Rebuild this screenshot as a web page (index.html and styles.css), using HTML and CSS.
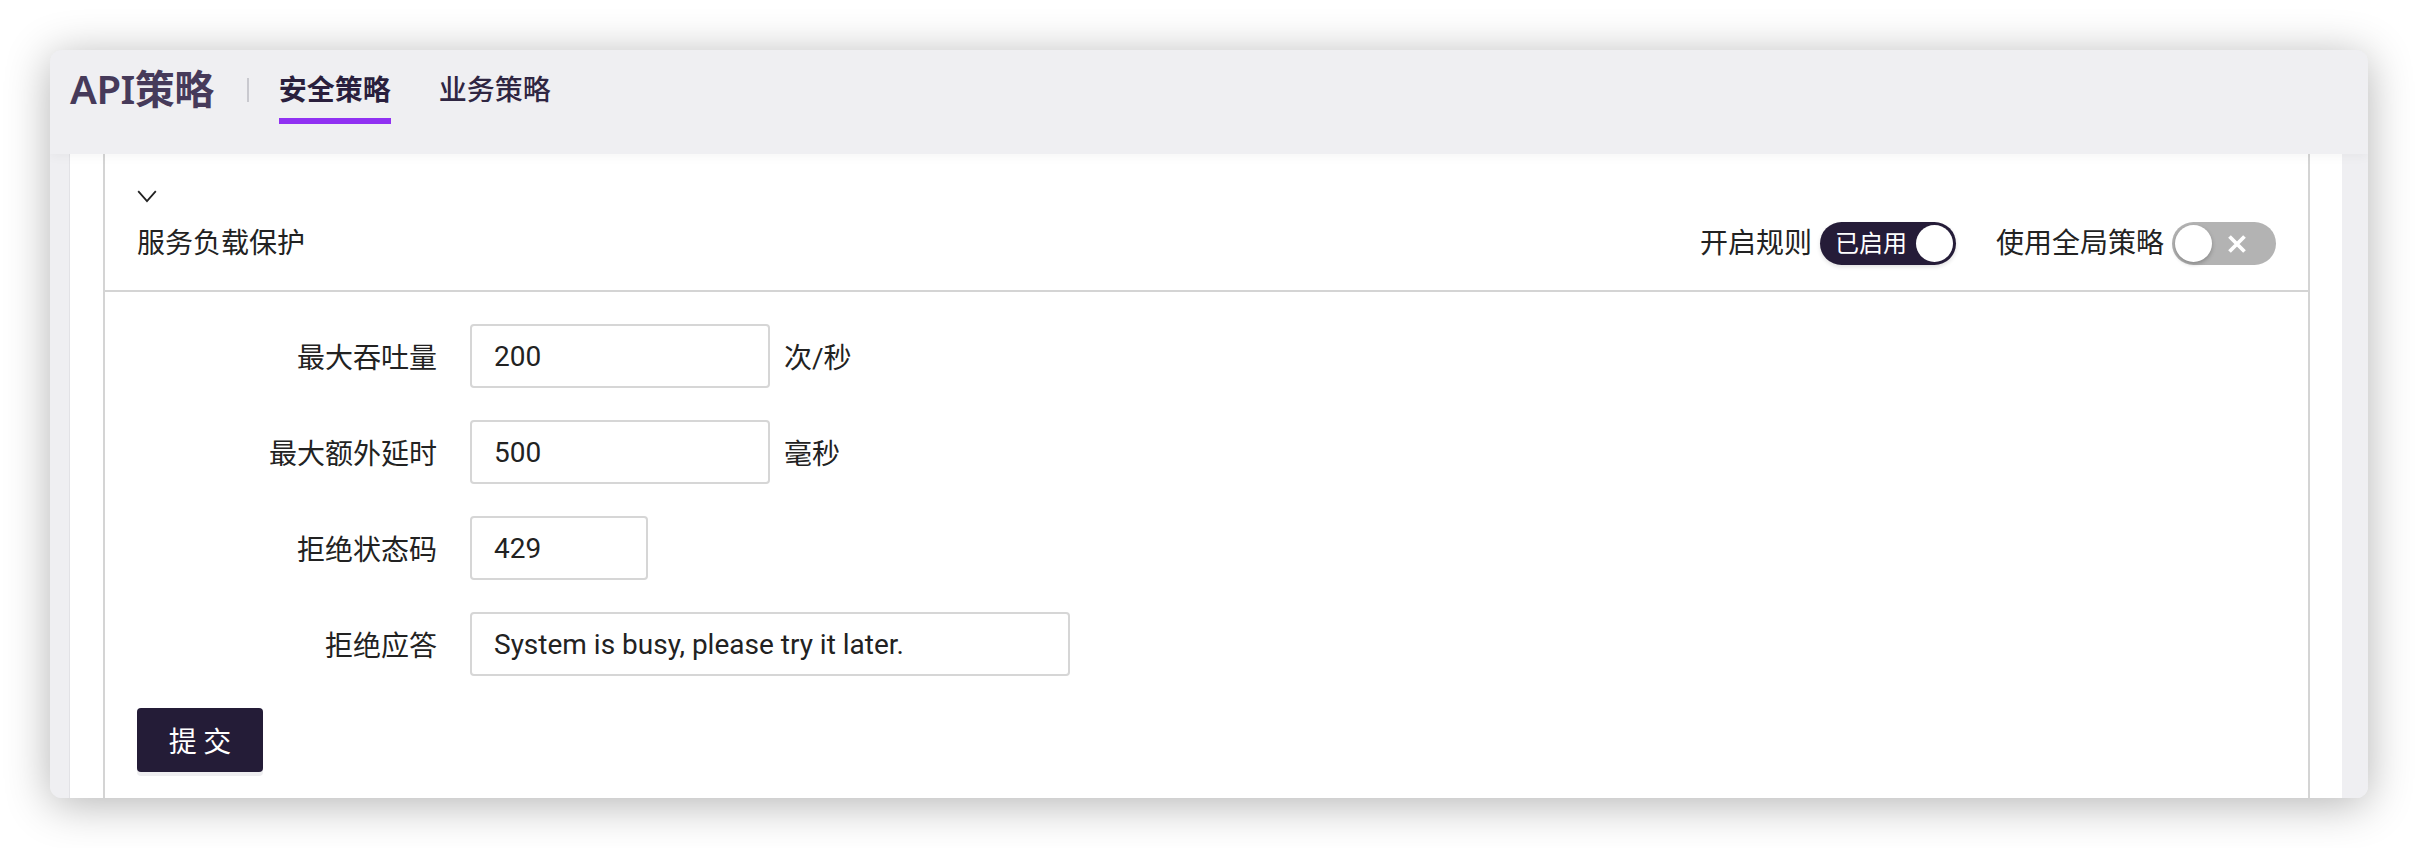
FILE: index.html
```html
<!DOCTYPE html>
<html lang="zh-CN">
<head>
<meta charset="utf-8">
<title>API策略</title>
<link rel="stylesheet" href="styles.css">
</head>
<body>
<div class="window">
  <header class="topbar">
    <h1 class="app-title">API策略</h1>
    <span class="sep"></span>
    <nav class="tabs">
      <a class="tab active">安全策略</a>
      <a class="tab">业务策略</a>
    </nav>
  </header>
  <div class="body">
    <div class="pad-left"></div>
    <main class="main">
      <section class="panel">
        <div class="panel-head">
          <svg class="chevron" width="20" height="13" viewBox="0 0 20 13"><path d="M1.2 1.2 L10 11.2 L18.8 1.2" fill="none" stroke="#222" stroke-width="1.8"/></svg>
          <div class="head-row">
            <span class="panel-title">服务负载保护</span>
            <div class="switches">
              <div class="sw-item">
                <span class="sw-label">开启规则</span>
                <span class="switch on"><span class="sw-text">已启用</span><span class="knob"></span></span>
              </div>
              <div class="sw-item">
                <span class="sw-label">使用全局策略</span>
                <span class="switch off"><span class="knob"></span><svg class="x-icon" width="20" height="20" viewBox="0 0 20 20"><path d="M2.5 2.5 L17.5 17.5 M17.5 2.5 L2.5 17.5" stroke="#fff" stroke-width="3.8" stroke-linecap="butt"/></svg></span>
              </div>
            </div>
          </div>
        </div>
        <form class="form">
          <div class="row">
            <label class="label">最大吞吐量</label>
            <div class="ctrl"><input class="input w-mid" value="200"><span class="unit">次/秒</span></div>
          </div>
          <div class="row">
            <label class="label">最大额外延时</label>
            <div class="ctrl"><input class="input w-mid" value="500"><span class="unit">毫秒</span></div>
          </div>
          <div class="row">
            <label class="label">拒绝状态码</label>
            <div class="ctrl"><input class="input w-small" value="429"></div>
          </div>
          <div class="row">
            <label class="label">拒绝应答</label>
            <div class="ctrl"><input class="input w-large" value="System is busy, please try it later."></div>
          </div>
          <button type="button" class="submit">提 交</button>
        </form>
      </section>
    </main>
    <div class="gutter"></div>
  </div>
</div>
</body>
</html>
```

FILE: styles.css
```css
* { box-sizing: border-box; }
html, body { margin: 0; padding: 0; background: #ffffff; }
body {
  padding: 50px;
  font-family: Roboto, "Noto Sans CJK SC", sans-serif;
  color: #222;
}
.window {
  height: 748px;
  border-radius: 12px;
  overflow: hidden;
  background: #efeff2;
  box-shadow: 0 6px 45px rgba(0, 0, 0, 0.3);
  display: flex;
  flex-direction: column;
}
.topbar {
  position: relative;
  z-index: 2;
  height: 104px;
  flex: none;
  display: flex;
  align-items: flex-start;
  padding: 0 20px;
  background: #efeff2;
  box-shadow: 0 3px 10px rgba(0, 0, 0, 0.04);
}
.app-title {
  margin: 19px 0 0;
  font-family: "Noto Sans", "Noto Sans CJK SC", sans-serif;
  font-size: 40px;
  line-height: 40px;
  font-weight: 600;
  color: #463a5a;
  letter-spacing: -0.5px;
}
.sep {
  width: 2px;
  height: 24px;
  margin: 28px 30px 0 33px;
  background: #c9c9cf;
}
.tabs {
  display: flex;
  gap: 48px;
}
.tab {
  display: flex;
  flex-direction: column;
  padding-top: 24px;
  font-family: "Noto Sans CJK SC", sans-serif;
  font-size: 28px;
  line-height: 28px;
  font-weight: 500;
  color: #2f2642;
}
.tab::after {
  content: "";
  height: 6px;
  margin-top: 16px;
  background: transparent;
}
.tab.active { font-weight: 700; color: #2a1f3d; }
.tab.active::after { background: #9031f2; }

.body {
  flex: 1;
  display: flex;
  overflow: hidden;
  background: #efeff2;
}
.pad-left {
  width: 20px;
  flex: none;
  border-right: 1px solid #e2e2e6;
}
.main {
  flex: 1;
  background: #fff;
  padding: 0 32px 0 33px;
  overflow: hidden;
}
.gutter {
  width: 26px;
  flex: none;
  background: #efeff2;
}
.panel {
  border-left: 2px solid #d4d4d4;
  border-right: 2px solid #d4d4d4;
  min-height: 100%;
  background: #fff;
}
.panel-head {
  padding: 36px 32px 25px;
  border-bottom: 2px solid #d4d4d4;
}
.chevron { display: block; }
.head-row {
  margin-top: 19px;
  height: 43px;
  display: flex;
  align-items: center;
  justify-content: space-between;
}
.panel-title {
  font-size: 28px;
  line-height: 43px;
  color: #222;
}
.switches {
  display: flex;
  align-items: center;
  gap: 40px;
}
.sw-item {
  display: flex;
  align-items: center;
  gap: 8px;
}
.sw-label { font-size: 28px; line-height: 43px; color: #222; }
.switch {
  height: 43px;
  border-radius: 22px;
  padding: 3px;
  display: flex;
  align-items: center;
}
.switch.on {
  width: 136px;
  background: #251c38;
  justify-content: space-between;
  box-shadow: 0 2px 4px rgba(0, 0, 0, 0.12);
}
.switch.off {
  width: 104px;
  background: #b3b3b3;
}
.sw-text {
  margin-left: 12px;
  font-size: 24px;
  line-height: 24px;
  color: #fff;
}
.knob {
  width: 37px;
  height: 37px;
  border-radius: 50%;
  background: #fff;
}
.switch.off .knob { box-shadow: 0 2px 4px rgba(0, 0, 0, 0.25); }
.x-icon { margin-left: 15px; display: block; }

.form {
  padding: 32px 32px;
}
.row {
  display: grid;
  grid-template-columns: 300px auto;
  column-gap: 33px;
  align-items: center;
  margin-bottom: 32px;
}
.label {
  text-align: right;
  font-size: 28px;
  color: #222;
}
.ctrl {
  display: flex;
  align-items: center;
  gap: 14px;
}
.input {
  height: 64px;
  border: 2px solid #d6d6d6;
  border-radius: 4px;
  padding: 0 22px;
  font-family: Roboto, "Noto Sans CJK SC", sans-serif;
  font-size: 28px;
  color: #222;
  background: #fff;
  outline: none;
}
.w-mid { width: 300px; }
.w-small { width: 178px; }
.w-large { width: 600px; }
.unit { font-size: 28px; color: #222; }
.submit {
  display: block;
  width: 126px;
  height: 64px;
  border: none;
  border-radius: 4px;
  background: #241c37;
  color: #fff;
  font-family: "Noto Sans CJK SC", sans-serif;
  font-size: 28px;
  box-shadow: 0 4px 0 #eeeef0;
  padding: 0;
}
```
